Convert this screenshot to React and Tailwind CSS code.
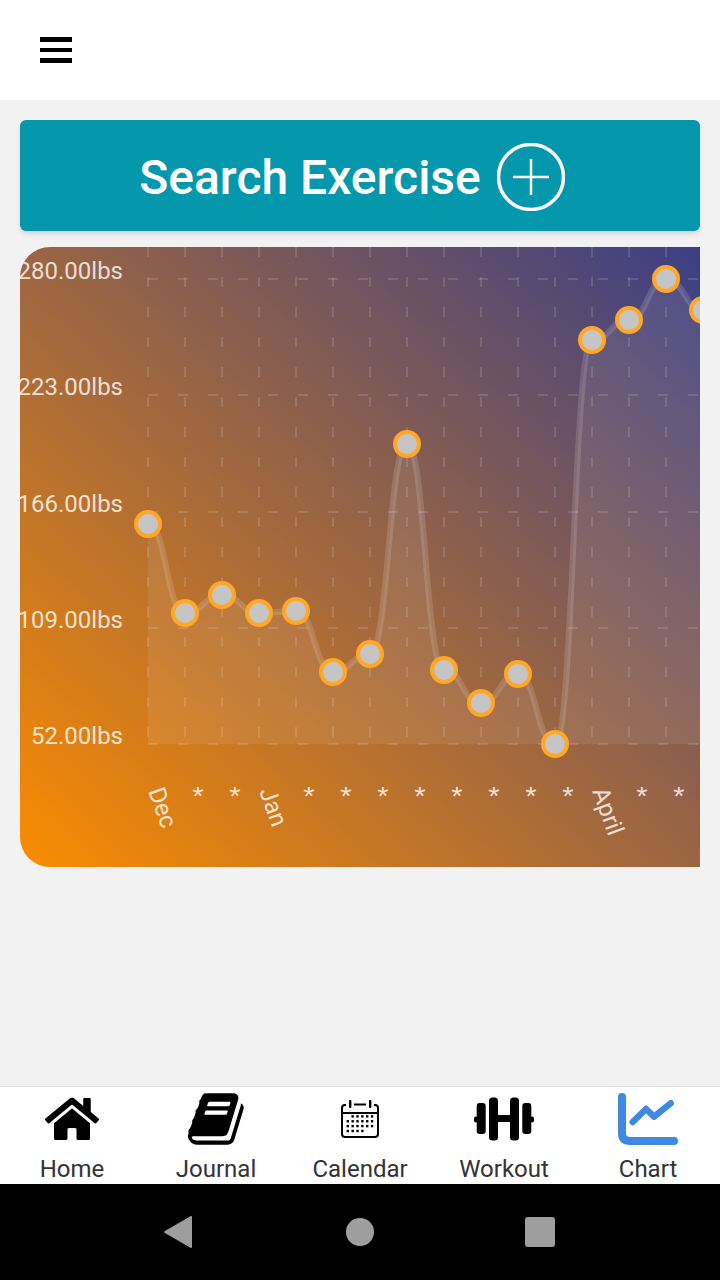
import React from "react";
import { FaHome } from "react-icons/fa";

const POINTS = [
  [148, 277], [185, 366], [222, 348], [259, 366], [296, 364], [333, 425], [370, 407], [407, 197],
  [444, 423], [481, 456], [518, 427], [555, 497], [592, 93], [629, 73], [666, 32], [703, 63],
];
const BASE_Y = 497;
const H_LINES = [32, 148, 265, 381, 497];
const Y_LABELS = [
  ["280.00lbs", 32],
  ["223.00lbs", 148],
  ["166.00lbs", 265],
  ["109.00lbs", 381],
  ["52.00lbs", 497],
];
const X_LABELS = ["Dec", "*", "*", "Jan", "*", "*", "*", "*", "*", "*", "*", "*", "April", "*", "*"];

function curve(points) {
  let d = `M${points[0][0]},${points[0][1]}`;
  for (let i = 1; i < points.length; i++) {
    const [x0, y0] = points[i - 1];
    const [x1, y1] = points[i];
    const mid = (x0 + x1) / 2;
    d += ` C${mid},${y0} ${mid},${y1} ${x1},${y1}`;
  }
  return d;
}

const Chart = () => {
  const line = curve(POINTS);
  const last = POINTS[POINTS.length - 1];
  return (
    <div className="mx-5 mt-4 h-[620px] overflow-hidden rounded-l-[30px] bg-linear-to-tr/srgb from-[#fb8c00] to-[#3b3f85]">
      {/* viewBox is the card's own coordinates, chart is clipped on the right */}
      <svg width="680" height="620" viewBox="20 0 680 620" className="block" fontFamily="Roboto, sans-serif">
        <path d={`${line} L${last[0]},${BASE_Y} L148,${BASE_Y} Z`} fill="#ffffff" fillOpacity="0.08" />
        {POINTS.slice(0, 15).map(([x]) => (
          <line key={x} x1={x} x2={x} y1="0" y2={BASE_Y} stroke="#ffffff" strokeOpacity="0.13" strokeWidth="2" strokeDasharray="10 20" />
        ))}
        {H_LINES.map((y) => (
          <line key={y} x1="148" x2="700" y1={y} y2={y} stroke="#ffffff" strokeOpacity="0.13" strokeWidth="2" strokeDasharray="10 20" />
        ))}
        <path d={line} fill="none" stroke="#ffffff" strokeOpacity="0.14" strokeWidth="6" />
        {POINTS.map(([x, y]) => (
          <circle key={x} cx={x} cy={y} r="12" fill="#c6c5c5" stroke="#ffa726" strokeWidth="4" />
        ))}
        {Y_LABELS.map(([label, y]) => (
          <text key={label} x="123" y={y} textAnchor="end" fontSize="24" fill="#ffffff" fillOpacity="0.8">
            {label}
          </text>
        ))}
        {X_LABELS.map((label, i) => {
          const x = 148 + i * 37;
          return (
            <text key={i} x={x} y="544" fontSize="24" fill="#ffffff" fillOpacity="0.8" transform={`rotate(70 ${x} 544)`}>
              {label}
            </text>
          );
        })}
      </svg>
    </div>
  );
};

const BookIcon = () => (
  <svg width="60" height="60" viewBox="0 0 1792 1792" fill="currentColor" className="ml-1">
    <path d="M1639 478q40 57 18 129l-275 906q-19 64-76.500 107.500t-122.500 43.500h-923q-77 0-148.500-53.500t-99.500-131.500q-24-67-2-127 0-4 3-27t4-37q1-8-3-21.500t-3-19.500q2-11 8-21t16.500-23.500 16.500-23.500q23-38 45-91.500t30-91.500q3-10 .5-30t-.5-28q3-11 17-28t17-23q21-36 42-92t25-90q1-9-2.500-32t.5-28q4-13 22-30.500t22-22.500q19-26 42.500-84.500t27.500-96.500q1-8-3-25.500t-2-26.500q2-8 9-18t18-23 17-21q8-12 16.500-30.500t15-35 16-36 19.500-32 26.500-23.500 36-11.500 47.500 5.500l-1 3q38-9 51-9h761q74 0 114 56t18 130l-274 906q-36 119-71.500 153.500t-128.500 34.500h-869q-27 0-38 15-11 16-1 43 24 70 144 70h923q29 0 56-15.500t35-41.500l300-987q7-22 5-57 38 15 59 43zm-1064 2q-4 13 2 22.500t20 9.500h608q13 0 25.500-9.500t16.500-22.500l21-64q4-13-2-22.500t-20-9.500h-608q-13 0-25.500 9.500t-16.500 22.500zm-83 256q-4 13 2 22.500t20 9.500h608q13 0 25.500-9.500t16.500-22.500l21-64q4-13-2-22.500t-20-9.500h-608q-13 0-25.500 9.500t-16.500 22.500z" />
  </svg>
);

// rows of the date grid: [first column, last column]
const CAL_ROWS = [[1, 5], [0, 5], [0, 5], [0, 3]];

const CalendarIcon = () => (
  <svg width="40" height="40" viewBox="0 0 40 40" fill="currentColor">
    <path d="M6 6 H5 A3 3 0 0 0 2 9 V35 A3 3 0 0 0 5 38 H35 A3 3 0 0 0 38 35 V9 A3 3 0 0 0 35 6 H34 M2 14 H38" fill="none" stroke="currentColor" strokeWidth="2" />
    <rect x="9" y="1" width="2.4" height="8" rx="1" />
    <rect x="29" y="1" width="2.4" height="8" rx="1" />
    <rect x="14" y="4.5" width="12" height="2" />
    {CAL_ROWS.map(([from, to], r) =>
      [0, 1, 2, 3, 4, 5]
        .filter((c) => c >= from && c <= to)
        .map((c) => <rect key={`${r}-${c}`} x={6.6 + c * 4.85} y={16.2 + r * 4.85} width="2.4" height="2.4" />)
    )}
  </svg>
);

const DumbbellIcon = () => (
  <svg width="60" height="44" viewBox="0 0 60 44" fill="currentColor">
    <rect x="0" y="19.500" width="4" height="6" rx="2" />
    <rect x="56" y="19.500" width="4" height="6" rx="2" />
    <rect x="2.700" y="6" width="9" height="31" rx="3" />
    <rect x="48.300" y="6" width="9" height="31" rx="3" />
    <rect x="15" y="0.500" width="9" height="43" rx="3.500" />
    <rect x="36" y="0.500" width="9" height="43" rx="3.500" />
    <rect x="20" y="18" width="20" height="7" />
  </svg>
);

const ChartIcon = () => (
  <svg width="62" height="54" viewBox="0 0 62 54" fill="none" stroke="currentColor" strokeLinecap="round" strokeLinejoin="round">
    <path d="M5 5 V41 Q5 49 13 49 H57" strokeWidth="8" />
    <path d="M15.700 30 L29 17 L37 24.700 L53.700 11.300" strokeWidth="6.500" />
  </svg>
);

const TABS = [
  { label: "Home", icon: <FaHome size={54} />, color: "text-black" },
  { label: "Journal", icon: <BookIcon />, color: "text-black" },
  { label: "Calendar", icon: <CalendarIcon />, color: "text-black" },
  { label: "Workout", icon: <DumbbellIcon />, color: "text-black" },
  { label: "Chart", icon: <ChartIcon />, color: "text-[#3f8ae0]" },
];

export default function App() {
  return (
    <div className="flex h-[1280px] w-[720px] flex-col overflow-hidden bg-[#f2f2f2] font-['Roboto',sans-serif]">
      <header className="flex h-[100px] items-center bg-white pl-10">
        <div className="flex w-8 flex-col gap-[6px]">
          <div className="h-[4.5px] bg-black" />
          <div className="h-[4.5px] bg-black" />
          <div className="h-[4.5px] bg-black" />
        </div>
      </header>

      <main className="flex-1 pt-5">
        <button className="mx-5 flex h-[111px] w-[680px] items-center justify-center gap-4 rounded-md bg-[#0597ac] pt-[3px] pr-4 text-[48px] font-medium text-white shadow-md">
          <span className="pt-[2px]">Search Exercise</span>
          <svg width="68" height="68" viewBox="0 0 68 68" fill="none" stroke="currentColor">
            <circle cx="34" cy="34" r="32.500" strokeWidth="3.500" />
            <path d="M34 16 V52 M16 34 H52" strokeWidth="2.500" />
          </svg>
        </button>
        <Chart />
      </main>

      <nav className="flex h-[98px] border-t border-[#dcdcdc] bg-white">
        {TABS.map((tab) => (
          <div key={tab.label} className="flex w-[144px] flex-col items-center">
            <div className={`flex h-[64px] items-center justify-center ${tab.color}`}>{tab.icon}</div>
            <span className="pt-[4px] text-[24px] leading-[28px] text-[#333333]">{tab.label}</span>
          </div>
        ))}
      </nav>

      <div className="flex h-[96px] items-center bg-black pl-[164px]">
        <svg width="28" height="32" viewBox="0 0 28 32" fill="#9e9e9e" stroke="#9e9e9e" strokeWidth="2" strokeLinejoin="round">
          <path d="M27 1 V31 L1 16 Z" />
        </svg>
        <div className="ml-[154px] h-[28px] w-[28px] rounded-full bg-[#9e9e9e]" />
        <div className="ml-[151px] h-[30px] w-[30px] rounded-[3px] bg-[#9e9e9e]" />
      </div>
    </div>
  );
}
